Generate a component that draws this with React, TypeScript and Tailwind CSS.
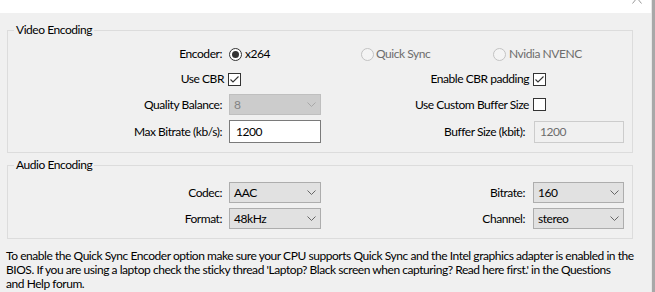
import React from "react";

const Radio = ({ checked, disabled }: { checked?: boolean; disabled?: boolean }) => (
  <svg width="13" height="13" viewBox="0 0 13 13" className="shrink-0">
    <circle
      cx="6.5"
      cy="6.5"
      r="6"
      fill={disabled ? "#f4f4f4" : "#ffffff"}
      stroke={disabled ? "#c2c2c2" : "#333333"}
    />
    {checked && <circle cx="6.5" cy="6.5" r="3.5" fill="#333333" />}
  </svg>
);

const Check = ({ checked }: { checked?: boolean }) => (
  <svg width="13" height="13" viewBox="0 0 13 13" className="shrink-0 ml-[4px]">
    <rect x="0.5" y="0.5" width="12" height="12" fill="#ffffff" stroke="#333333" />
    {checked && (
      <path d="M2.5 6.5 L5 9 L10.5 3.5" fill="none" stroke="#333333" strokeWidth="1.1" />
    )}
  </svg>
);

const Chevron = ({ disabled }: { disabled?: boolean }) => (
  <svg width="9" height="5" viewBox="0 0 9 5" className="shrink-0">
    <path d="M0.5 0.5 L4.5 4.5 L8.5 0.5" fill="none" stroke={disabled ? "#a8a8a8" : "#666666"} />
  </svg>
);

const Combo = ({ value, width, disabled }: { value: string; width: string; disabled?: boolean }) => (
  <div
    className={`${width} h-[21px] shrink-0 flex items-center justify-between pl-[4px] pr-[4px] border ${
      disabled ? "bg-[#cccccc] border-[#bfbfbf] text-[#838383]" : "bg-[#e1e1e1] border-[#adadad] text-black"
    }`}
  >
    <span>{value}</span>
    <Chevron disabled={disabled} />
  </div>
);

const Legend = ({ children }: { children: React.ReactNode }) => (
  <legend className="ml-[6px] px-[2px] leading-[16px]">{children}</legend>
);

export default function App() {
  return (
    <div className="w-[655px] h-[292px] flex overflow-hidden bg-white text-[12px] tracking-[-0.45px] text-black font-['Lato','Liberation_Sans',sans-serif]">
      <div className="w-[651px] flex flex-col">
        <div className="h-[13px] bg-white relative">
          <svg width="12" height="4" viewBox="0 0 12 4" className="absolute left-[631px] top-0">
            <path d="M6 -2 L1.5 3.5 M6 -2 L10.5 3.5" stroke="#9a9a9a" fill="none" />
          </svg>
        </div>
        <div className="flex-1 bg-[#f0f0f0] pt-[9px]">
          <fieldset className="ml-[7px] w-[626px] border border-[#dcdcdc]">
            <Legend>Video Encoding</Legend>
            <div className="flex items-center h-[18px] mt-[7px]">
              <span className="w-[214px] text-right">Encoder:</span>
              <div className="ml-[7px] w-[132px] flex items-center gap-[3px]">
                <Radio checked />
                <span>x264</span>
              </div>
              <div className="w-[132px] flex items-center gap-[2px] text-[#6d6d6d]">
                <Radio disabled />
                <span>Quick Sync</span>
              </div>
              <div className="flex items-center gap-[3px] text-[#6d6d6d]">
                <Radio disabled />
                <span>Nvidia NVENC</span>
              </div>
            </div>
            <div className="flex items-center h-[18px] mt-[7px]">
              <span className="w-[216px] text-right">Use CBR</span>
              <Check checked />
              <span className="flex-1 text-right">Enable CBR padding</span>
              <Check checked />
              <div className="w-[86px]" />
            </div>
            <div className="flex items-center h-[21px] mt-[6px]">
              <span className="w-[214px] text-right">Quality Balance:</span>
              <div className="ml-[7px]">
                <Combo value="8" width="w-[92px]" disabled />
              </div>
              <span className="flex-1 text-right">Use Custom Buffer Size</span>
              <Check />
              <div className="w-[86px]" />
            </div>
            <div className="flex items-center h-[23px] mt-[5px] mb-[9px]">
              <span className="w-[214px] text-right">Max Bitrate (kb/s):</span>
              <div className="ml-[7px] w-[92px] h-[23px] bg-white border border-[#7a7a7a] flex items-center pl-[6px]">
                1200
              </div>
              <span className="flex-1 text-right">Buffer Size (kbit):</span>
              <div className="ml-[9px] w-[90px] h-[22px] bg-[#f0f0f0] border border-[#cccccc] flex items-center pl-[5px] text-[#6d6d6d]">
                1200
              </div>
              <div className="w-[8px]" />
            </div>
          </fieldset>

          <fieldset className="ml-[7px] mt-[4px] w-[626px] border border-[#dcdcdc]">
            <Legend>Audio Encoding</Legend>
            <div className="flex items-center h-[21px] mt-[9px]">
              <span className="w-[214px] text-right">Codec:</span>
              <div className="ml-[7px]">
                <Combo value="AAC" width="w-[92px]" />
              </div>
              <span className="flex-1 text-right">Bitrate:</span>
              <div className="ml-[8px]">
                <Combo value="160" width="w-[91px]" />
              </div>
              <div className="w-[8px]" />
            </div>
            <div className="flex items-center h-[21px] mt-[5px] mb-[9px]">
              <span className="w-[214px] text-right">Format:</span>
              <div className="ml-[7px]">
                <Combo value="48kHz" width="w-[92px]" />
              </div>
              <span className="flex-1 text-right">Channel:</span>
              <div className="ml-[8px]">
                <Combo value="stereo" width="w-[91px]" />
              </div>
              <div className="w-[8px]" />
            </div>
          </fieldset>

          <p className="ml-[6px] mt-[10px] leading-[14px] whitespace-nowrap">
            <span className="block">
              To enable the Quick Sync Encoder option make sure your CPU supports Quick Sync and the Intel graphics adapter is enabled in the
            </span>
            <span className="block">
              BIOS. If you are using a laptop check the sticky thread 'Laptop? Black screen when capturing? Read here first.' in the Questions
            </span>
            <span className="block">and Help forum.</span>
          </p>
        </div>
      </div>
      <div className="w-[1px] bg-[#e6e6e6]" />
      <div className="w-[3px] bg-[#a8a8a8]" />
    </div>
  );
}
